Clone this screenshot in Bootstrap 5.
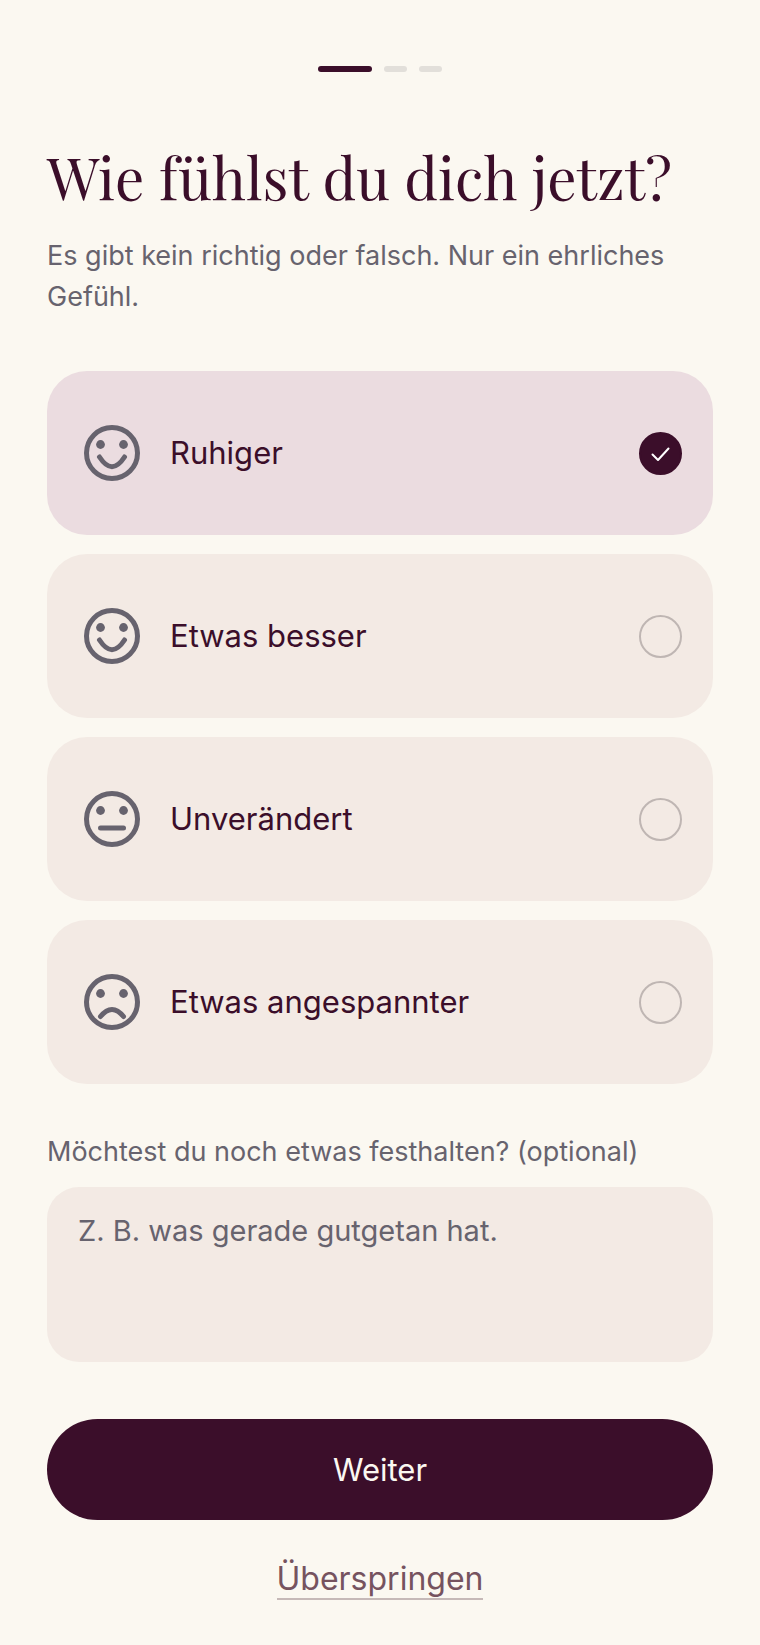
<!DOCTYPE html>
<html lang="de">
<head>
<meta charset="utf-8">
<meta name="viewport" content="width=device-width, initial-scale=1">
<title>Wie fühlst du dich jetzt?</title>
<link href="https://cdn.jsdelivr.net/npm/bootstrap@5.3.0/dist/css/bootstrap.min.css" rel="stylesheet">
<style>
  :root { --plum: #3b0e2a; --slate: #67636e; --sand: #f3eae4; --rose: #ebdce0; --cream: #fbf8f1; }
  body { background: var(--cream); color: var(--plum); font-family: Inter, "Liberation Sans", sans-serif; }
  .checkin { padding: 66px 47px 40px; }
  .steps { gap: 12px; margin-bottom: 66px; }
  .step { width: 23px; height: 6px; border-radius: 3px; background: #e2dfda; }
  .step.active { width: 54px; background: var(--plum); }
  .title { font-family: "Playfair Display", "Liberation Serif", serif; font-size: 58px; line-height: 76px; font-weight: 400; margin-bottom: 21px; }
  .intro { font-size: 27px; line-height: 41px; color: var(--slate); margin-bottom: 54px; }
  .moods { gap: 19px; margin-bottom: 48px; }
  .mood { height: 164px; padding: 0 31px 0 37px; border-radius: 40px; background: var(--sand); font-size: 31px; line-height: 40px; cursor: pointer; }
  .mood:has(:checked) { background: var(--rose); }
  .mood svg { width: 56px; height: 56px; margin-right: 30px; color: var(--slate); }
  .mood .form-check-input { width: 43px; height: 43px; margin: 0; border: 2px solid #bfb6b3; background-color: transparent; }
  .mood .form-check-input:checked { border-color: var(--plum); background-color: var(--plum); background-size: 43px 43px; background-position: center;
    background-image: url("data:image/svg+xml,%3Csvg xmlns='http://www.w3.org/2000/svg' viewBox='0 0 43 43'%3E%3Cpath d='M13.5 22.5l5.5 5.5L29.5 16.5' fill='none' stroke='%23fff' stroke-width='2' stroke-linecap='round' stroke-linejoin='round'/%3E%3C/svg%3E"); }
  .note-label { font-size: 27px; line-height: 40px; color: var(--slate); margin-bottom: 15px; }
  .note { height: 175px; padding: 24px 31px; border: 0; border-radius: 32px; background: var(--sand); font-size: 29px; line-height: 40px; color: var(--plum); resize: none; margin-bottom: 57px; }
  .note:focus { background: var(--sand); }
  .note::placeholder { color: var(--slate); opacity: 1; }
  .next { --bs-btn-color: #fbf8f1; --bs-btn-bg: #3b0e2a; --bs-btn-hover-color: #fbf8f1; --bs-btn-hover-bg: #51203e; --bs-btn-border-width: 0; height: 101px; font-size: 31px; line-height: 40px; margin-bottom: 39px; }
  .skip { font-size: 32px; line-height: 39px; color: #76535f; border-bottom: 2px solid #c6b9b8; }
</style>
</head>
<body>
<main class="checkin container-fluid">
  <div class="steps d-flex justify-content-center" role="progressbar" aria-label="Fortschritt" aria-valuemin="1" aria-valuemax="3" aria-valuenow="1">
    <span class="step active"></span><span class="step"></span><span class="step"></span>
  </div>
  <h1 class="title">Wie fühlst du dich jetzt?</h1>
  <p class="intro">Es gibt kein richtig oder falsch. Nur ein ehrliches Gefühl.</p>
  <form>
    <div class="moods d-flex flex-column" role="radiogroup" aria-label="Gefühl">
      <label class="mood d-flex align-items-center" for="calmer">
        <svg viewBox="0 0 56 56" fill="none" stroke="currentColor" stroke-width="5" stroke-linecap="round" aria-hidden="true"><circle cx="28" cy="28" r="25.5"/><path d="M15.5 32C24 45 32 45 40.5 32"/><g fill="currentColor" stroke="none"><circle cx="16.5" cy="19.5" r="4.4"/><circle cx="39.5" cy="19.5" r="4.4"/></g></svg>
        <span class="flex-grow-1">Ruhiger</span>
        <input class="form-check-input" type="radio" name="mood" id="calmer" checked>
      </label>
      <label class="mood d-flex align-items-center" for="better">
        <svg viewBox="0 0 56 56" fill="none" stroke="currentColor" stroke-width="5" stroke-linecap="round" aria-hidden="true"><circle cx="28" cy="28" r="25.5"/><path d="M15.5 32C24 45 32 45 40.5 32"/><g fill="currentColor" stroke="none"><circle cx="16.5" cy="19.5" r="4.4"/><circle cx="39.5" cy="19.5" r="4.4"/></g></svg>
        <span class="flex-grow-1">Etwas besser</span>
        <input class="form-check-input" type="radio" name="mood" id="better">
      </label>
      <label class="mood d-flex align-items-center" for="same">
        <svg viewBox="0 0 56 56" fill="none" stroke="currentColor" stroke-width="5" stroke-linecap="round" aria-hidden="true"><circle cx="28" cy="28" r="25.5"/><path d="M16.5 37H39.5"/><g fill="currentColor" stroke="none"><circle cx="16.5" cy="19.5" r="4.4"/><circle cx="39.5" cy="19.5" r="4.4"/></g></svg>
        <span class="flex-grow-1">Unverändert</span>
        <input class="form-check-input" type="radio" name="mood" id="same">
      </label>
      <label class="mood d-flex align-items-center" for="tense">
        <svg viewBox="0 0 56 56" fill="none" stroke="currentColor" stroke-width="5" stroke-linecap="round" aria-hidden="true"><circle cx="28" cy="28" r="25.5"/><path d="M16.5 42.5C24 33 32 33 39.5 42.5"/><g fill="currentColor" stroke="none"><circle cx="16.5" cy="19.5" r="4.4"/><circle cx="39.5" cy="19.5" r="4.4"/></g></svg>
        <span class="flex-grow-1">Etwas angespannter</span>
        <input class="form-check-input" type="radio" name="mood" id="tense">
      </label>
    </div>
    <label class="note-label d-block" for="note">Möchtest du noch etwas festhalten? (optional)</label>
    <textarea class="note form-control" id="note" placeholder="Z. B. was gerade gutgetan hat."></textarea>
    <button class="next btn w-100 rounded-pill" type="submit">Weiter</button>
    <div class="text-center"><a class="skip d-inline-block text-decoration-none" href="#">Überspringen</a></div>
  </form>
</main>
<script src="https://cdn.jsdelivr.net/npm/bootstrap@5.3.0/dist/js/bootstrap.bundle.min.js"></script>
</body>
</html>
